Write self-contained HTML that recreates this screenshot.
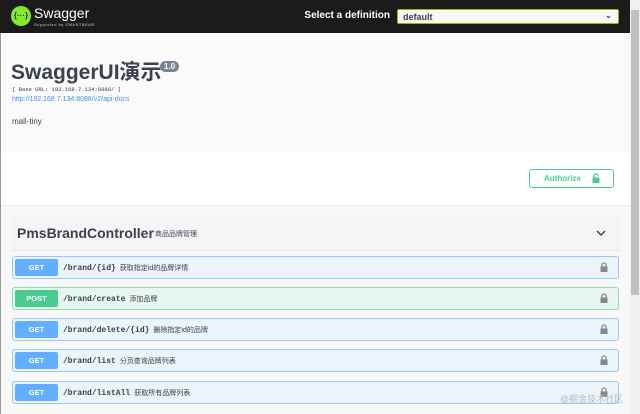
<!DOCTYPE html>
<html><head><meta charset="utf-8"><style>
*{box-sizing:border-box;margin:0;padding:0}
body{width:640px;height:414px;overflow:hidden;background:#fff;font-family:"Liberation Sans","Noto Sans CJK SC",sans-serif;position:relative}
.top{position:absolute;left:0;top:0;width:630px;height:33px;background:#1b1b1b}
.logo{position:absolute;left:11px;top:6px;width:20px;height:20px;border-radius:50%;background:#85ea2d;color:#173647;font-size:8px;font-weight:bold;text-align:center;line-height:20px}
.sw{position:absolute;left:34px;top:5px;color:#fff;font-size:14px}
.sb{position:absolute;left:34px;top:22px;color:#ccc;font-size:4px;letter-spacing:.5px}
.sel{position:absolute;right:240px;top:10px;color:#fff;font-size:10px;font-weight:bold;white-space:nowrap}
.box{position:absolute;left:397px;top:9px;width:222px;height:15px;background:#f7f7f7;border:1px solid #89bf04;border-radius:2px;font-size:9px;font-weight:bold;color:#3b4151;padding:2px 5px}
.box span{position:absolute;right:6px;top:1px;font-size:8px}
.info{position:absolute;left:0;top:33px;width:630px;height:120px;background:#fafafa}
h1{position:absolute;left:11px;top:61px;font-size:21px;line-height:24px;color:#3b4151;font-weight:bold;white-space:nowrap}
.ver{position:absolute;left:160px;top:61px;background:#7d8492;color:#fff;font-size:8px;font-weight:bold;border-radius:6px;padding:1px 4px}
.base{position:absolute;left:12px;top:86px;font-family:"Liberation Mono",monospace;font-size:5.5px;color:#3b4151;white-space:nowrap}
.url{position:absolute;left:12px;top:96px;font-size:7px;color:#4990e2}
.mt{position:absolute;left:12px;top:117px;font-size:8px;color:#3b4151}
.auth{position:absolute;left:529px;top:169px;width:85px;height:19px;border:1.5px solid #49cc90;border-radius:3px;color:#49cc90;font-size:8px;font-weight:bold;padding:4px 0 0 14px}
.lockg{position:absolute;left:592px;top:173px;width:8px;height:10px}
.gray{position:absolute;left:0;top:205px;width:630px;height:209px;background:#f8f8f8;border-top:1px solid #eaeaea}
.tag{position:absolute;left:12px;top:215px;width:608px;height:36px;border-bottom:1px solid #e8e8e8;background:#f5f5f5}
.tag b{position:absolute;left:5px;top:10px;font-size:14px;color:#3b4151}
.tag i{position:absolute;left:143px;top:14px;font-size:7px;font-style:normal;color:#3b4151}
.chev{position:absolute;right:14px;top:14px}
.op{position:absolute;left:12px;width:607px;height:23px;border:1px solid #9cc8f5;border-radius:3px;background:#ebf3fb}
.op.post{border-color:#8edbb6;background:#e8f6f0}
.m{position:absolute;left:2px;top:2px;width:43px;height:17px;border-radius:2px;background:#61affe;color:#fff;font-size:7.5px;font-weight:bold;text-align:center;line-height:17px}
.post .m{background:#49cc90}
.p{position:absolute;left:50px;top:6px;font-family:"Liberation Mono",monospace;font-weight:bold;font-size:8px;color:#3b4151;white-space:nowrap}
.d{font-family:"Liberation Sans","Noto Sans CJK SC",sans-serif;font-weight:normal;font-size:7px;margin-left:4px}
.lk{position:absolute;right:10px;top:5px}
.scroll{position:absolute;left:630px;top:0;width:10px;height:414px;background:#f0f0f0}
.thumb{position:absolute;left:631px;top:10px;width:8px;height:285px;background:#c1c1c1}
.wm{position:absolute;left:560px;top:392px;font-size:9px;color:#bbb}
.lb{position:absolute;left:0;top:33px;width:1px;height:381px;background:#9a9a9a}
</style></head><body>
<div class="top"><div class="logo">{···}</div><div class="sw">Swagger</div><div class="sb">Supported by SMARTBEAR</div>
<div class="sel">Select a definition</div><div class="box">default<span>⌄</span></div></div>
<div class="info"></div>
<h1>SwaggerUI演示</h1><div class="ver">1.0</div>
<div class="base">[ Base URL: 192.168.7.134:8088/ ]</div>
<div class="url">http://192.168.7.134:8088/v2/api-docs</div>
<div class="mt">mall-tiny</div>
<div class="auth">Authorize</div>
<svg class="lockg" viewBox="0 0 8 10"><path d="M2 5V3a2 2 0 0 1 4 0" stroke="#49cc90" stroke-width="1.3" fill="none"/><rect x="0.5" y="4.5" width="7" height="5.5" fill="#49cc90"/></svg>
<div class="gray"></div>
<div class="tag"><b>PmsBrandController</b><i>商品品牌管理</i>
<svg class="chev" width="10" height="8" viewBox="0 0 10 8"><path d="M1 2l4 4 4-4" stroke="#333" stroke-width="1.3" fill="none"/></svg></div>
<div class="op" style="top:256px"><div class="m">GET</div><div class="p">/brand/{id}<span class="d">获取指定id的品牌详情</span></div><svg class="lk" width="8" height="10" viewBox="0 0 8 10"><path d="M2 5V3a2 2 0 0 1 4 0v2" stroke="#888" stroke-width="1.3" fill="none"/><rect x="0.5" y="4.5" width="7" height="5.5" fill="#888"/></svg></div>
<div class="op post" style="top:287px"><div class="m">POST</div><div class="p">/brand/create<span class="d">添加品牌</span></div><svg class="lk" width="8" height="10" viewBox="0 0 8 10"><path d="M2 5V3a2 2 0 0 1 4 0v2" stroke="#888" stroke-width="1.3" fill="none"/><rect x="0.5" y="4.5" width="7" height="5.5" fill="#888"/></svg></div>
<div class="op" style="top:318px"><div class="m">GET</div><div class="p">/brand/delete/{id}<span class="d">删除指定id的品牌</span></div><svg class="lk" width="8" height="10" viewBox="0 0 8 10"><path d="M2 5V3a2 2 0 0 1 4 0v2" stroke="#888" stroke-width="1.3" fill="none"/><rect x="0.5" y="4.5" width="7" height="5.5" fill="#888"/></svg></div>
<div class="op" style="top:349px"><div class="m">GET</div><div class="p">/brand/list<span class="d">分页查询品牌列表</span></div><svg class="lk" width="8" height="10" viewBox="0 0 8 10"><path d="M2 5V3a2 2 0 0 1 4 0v2" stroke="#888" stroke-width="1.3" fill="none"/><rect x="0.5" y="4.5" width="7" height="5.5" fill="#888"/></svg></div>
<div class="op" style="top:381px"><div class="m">GET</div><div class="p">/brand/listAll<span class="d">获取所有品牌列表</span></div><svg class="lk" width="8" height="10" viewBox="0 0 8 10"><path d="M2 5V3a2 2 0 0 1 4 0v2" stroke="#888" stroke-width="1.3" fill="none"/><rect x="0.5" y="4.5" width="7" height="5.5" fill="#888"/></svg></div>
<div class="wm">@掘金技术社区</div>
<div class="lb"></div>
<div class="scroll"></div><div class="thumb"></div>
</body></html>
